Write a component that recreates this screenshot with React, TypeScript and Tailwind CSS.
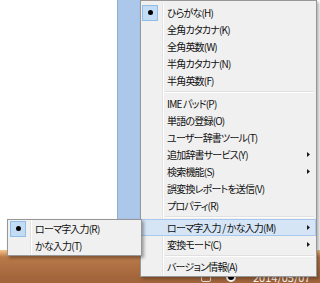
import clsx from "clsx";

type Entry =
  | { kind: "item"; label: string; checked?: boolean; arrow?: boolean; active?: boolean }
  | { kind: "sep"; h: string };

const mainEntries: Entry[] = [
  { kind: "item", label: "ひらがな(H)", checked: true },
  { kind: "item", label: "全角カタカナ(K)" },
  { kind: "item", label: "全角英数(W)" },
  { kind: "item", label: "半角カタカナ(N)" },
  { kind: "item", label: "半角英数(F)" },
  { kind: "sep", h: "h-[6px]" },
  { kind: "item", label: "IME パッド(P)" },
  { kind: "item", label: "単語の登録(O)" },
  { kind: "item", label: "ユーザー辞書ツール(T)" },
  { kind: "item", label: "追加辞書サービス(Y)", arrow: true },
  { kind: "item", label: "検索機能(S)", arrow: true },
  { kind: "item", label: "誤変換レポートを送信(V)" },
  { kind: "item", label: "プロパティ(R)" },
  { kind: "sep", h: "h-[5px]" },
  { kind: "item", label: "ローマ字入力 / かな入力(M)", arrow: true, active: true },
  { kind: "item", label: "変換モード(C)", arrow: true },
  { kind: "sep", h: "h-[5px]" },
  { kind: "item", label: "バージョン情報(A)" },
];

const subEntries: Entry[] = [
  { kind: "item", label: "ローマ字入力(R)", checked: true },
  { kind: "item", label: "かな入力(T)" },
];

const Gutter = ({ hideLine, children }: { hideLine?: boolean; children?: React.ReactNode }) => (
  <div
    className={clsx(
      "flex w-[22px] shrink-0 items-center pl-[1px]",
      !hideLine && "border-r border-[#e2e3e3] shadow-[1px_0_0_#ffffff]"
    )}
  >
    {children}
  </div>
);

const MenuRow = ({ entry }: { entry: Entry }) => {
  if (entry.kind === "sep") {
    return (
      <div className={clsx("flex", entry.h)}>
        <Gutter />
        <div className="flex flex-1 items-center pl-[2px] pr-[2px]">
          <div className="h-[2px] w-full border-t border-[#e0e0e0] border-b border-b-white" />
        </div>
      </div>
    );
  }
  return (
    <div
      className={clsx(
        "flex h-[17px]",
        entry.active && "bg-[#d5e5f6] shadow-[inset_0_0_0_1px_#a8c9ee]"
      )}
    >
      <Gutter hideLine={entry.active}>
        {entry.checked && (
          <div className="flex h-[16px] w-[16px] items-center justify-center border border-[#8fbde9] bg-[#c3dcf3]">
            <div className="h-[5px] w-[5px] rounded-full bg-black" />
          </div>
        )}
      </Gutter>
      <div className="flex flex-1 items-center justify-between pl-[4px] pr-[6px]">
        <span className="whitespace-nowrap leading-none tracking-[-0.8px]">{entry.label}</span>
        {entry.arrow && (
          <svg width="3" height="5" viewBox="0 0 3 5" className="block">
            <path d="M0 0 L3 2.5 L0 5 Z" fill="#1a1a1a" />
          </svg>
        )}
      </div>
    </div>
  );
};

export default function App() {
  return (
    <div className="relative h-[283px] w-[320px] overflow-hidden bg-white font-['Noto_Sans_CJK_JP',sans-serif] text-[10px] text-[#111] [font-feature-settings:'palt']">
      {/* desktop behind the menu */}
      <div className="flex h-full flex-col">
        <div className="flex h-[255px]">
          <div className="w-[118px] border-r border-[#93acc9] bg-white" />
          <div className="w-[22px] bg-[#abc7e9]" />
          <div className="flex-1 bg-white" />
        </div>
        <div className="flex-1 bg-[linear-gradient(#f2c590_0px,#e1a46b_3px,#b9794a_7px,#a2653b_28px)]">
          <div className="flex items-start pt-[22px] pl-[201px] text-[11px] text-white">
            <div className="h-[10px] w-[10px] rounded-[2px] border border-[#ddd]" />
            <div className="ml-[15px] h-[10px] w-[10px] rounded-full border-2 border-white bg-black" />
            <span className="ml-[17px] leading-none">2014/05/07</span>
          </div>
        </div>
      </div>

      {/* main context menu */}
      <div className="absolute left-[140px] top-0 w-[177px] border border-[#979797] bg-[#f0f0f0] pt-[3px] pb-[1px] shadow-[2px_2px_3px_rgba(0,0,0,0.3)]">
        {mainEntries.map((e, i) => (
          <MenuRow key={i} entry={e} />
        ))}
      </div>

      {/* sub menu */}
      <div className="absolute left-[7px] top-[219px] w-[135px] border border-[#979797] bg-[#f0f0f0] pb-[1px] pl-[1px] shadow-[2px_2px_3px_rgba(0,0,0,0.35)]">
        {subEntries.map((e, i) => (
          <MenuRow key={i} entry={e} />
        ))}
      </div>
    </div>
  );
}
